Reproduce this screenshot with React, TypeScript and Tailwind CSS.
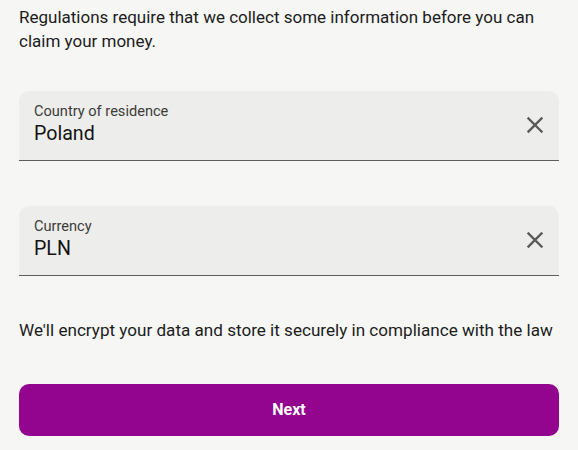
function ClearIcon() {
  return (
    <svg width="20" height="20" viewBox="0 0 20 20" fill="none" stroke="#5a5a58" strokeWidth="2.4" strokeLinecap="square">
      <path d="M3.5 3.5 L16.5 16.5 M16.5 3.5 L3.5 16.5" />
    </svg>
  );
}

function Field({ label, value }: { label: string; value: string }) {
  return (
    <div className="flex h-[70px] items-start justify-between rounded-t-[10px] border-b border-[#5f5f5c] bg-[#ededeb] pl-[15px] pr-[14px] pt-[11px]">
      <div className="flex flex-col">
        <span className="text-[14.6px] leading-[18px] text-[#3c3c3a]">{label}</span>
        <span className="mt-[2px] text-[19.6px] leading-[24px] text-[#141414]">{value}</span>
      </div>
      <button className="mt-[13px]" aria-label="Clear">
        <ClearIcon />
      </button>
    </div>
  );
}

export default function App() {
  return (
    <div className="min-h-[450px] w-[578px] bg-[#f6f6f4] px-[19px] pt-[5px] font-['Roboto',sans-serif]">
      <p className="text-[17px] leading-[24px] text-[#1c1c1c]">
        Regulations require that we collect some information before you can claim your money.
      </p>
      <div className="mt-[38px]">
        <Field label="Country of residence" value="Poland" />
      </div>
      <div className="mt-[45px]">
        <Field label="Currency" value="PLN" />
      </div>
      <p className="mt-[42px] text-[17.1px] leading-[24px] text-[#1c1c1c]">
        We'll encrypt your data and store it securely in compliance with the law
      </p>
      <button className="mt-[42px] flex h-[52px] w-full items-center justify-center rounded-[10px] bg-[#93058f] text-[16px] font-bold text-white">
        Next
      </button>
    </div>
  );
}
